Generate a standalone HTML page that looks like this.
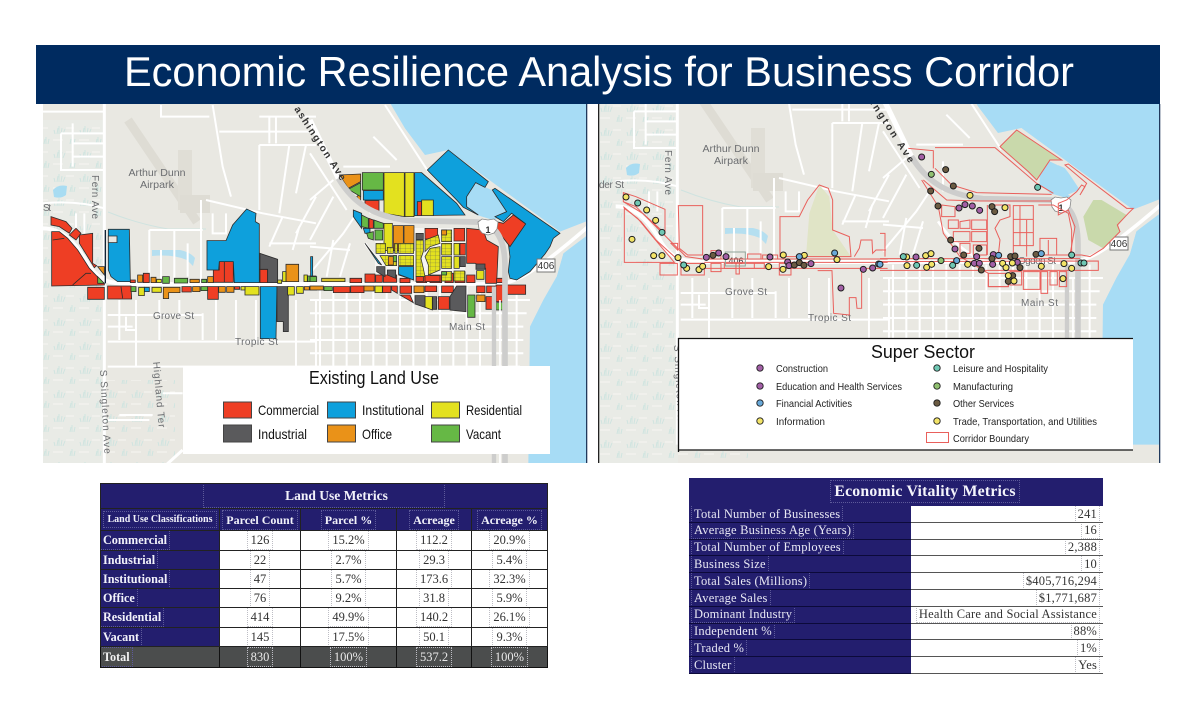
<!DOCTYPE html>
<html lang="en"><head><meta charset="utf-8"><title>Economic Resilience Analysis for Business Corridor</title>
<style>
html,body{margin:0;padding:0;background:#fff}
body{width:1192px;height:720px;position:relative;overflow:hidden;font-family:"Liberation Sans",sans-serif}
#maps{position:absolute;left:0;top:0;filter:blur(.35px)}
table{position:absolute;border-collapse:collapse;table-layout:fixed;font-family:"Liberation Serif",serif;color:#333;background:#fff}
td,th{padding:0;overflow:hidden;white-space:nowrap;line-height:1}
span{outline:1px dotted #bdbdc4;outline-offset:0;padding:2px 3px}
th span,td.l span{outline-color:#5d5a9a}
#t1{left:100px;top:483px;width:447px;border:1px solid #111}
#t1 td,#t1 th{border:1px solid #222;text-align:center;font-size:12.5px}
#t1 th{background:#231e6e;color:#f2f2fa;font-weight:bold;font-size:12px}
#t1 td.l{background:#231e6e;color:#f2f2fa;font-weight:bold;text-align:left;padding-left:0;font-size:12.2px}
#t1 td.l span{padding:2px 2px}
#t1 .tot td{background:#4b4d4d;color:#e8e8e8;border-color:#111}
#t1 .tot td.l{background:#4b4d4d;color:#f2f2f2}
#t2{left:689px;top:478px;width:414px}
#t2 th{background:#231e6e;color:#f4f4fb;font-size:15.8px;font-weight:bold;text-align:center;height:28px;padding-left:58px;letter-spacing:.2px}
#t2 td{height:15.8px;font-size:12.5px;border-bottom:1px solid #555;letter-spacing:.2px}
#t2 td span{padding:1px 2px}
#t2 td.l{background:#231e6e;color:#e8e8f4;padding-left:3px;border-bottom:1px solid #0c0a3a}
#t2 td.v{text-align:right;padding-right:4px;color:#333}
</style></head><body>
<svg id="maps" width="1192" height="480" viewBox="0 0 1192 480" xmlns="http://www.w3.org/2000/svg" font-family="'Liberation Sans',sans-serif">
<defs>
<clipPath id="cl"><rect x="43" y="104" width="543" height="359"/></clipPath>
<clipPath id="cr"><rect x="599" y="104" width="560" height="359"/></clipPath>
<pattern id="tuft" patternUnits="userSpaceOnUse" width="26" height="24"><path d="M5 14l1-6M7 14l0-8M9 14l1-6M11 14l2-5M3 14l-1-4M18 24l1-5M20 24v-7M22 24l1-5" stroke="#cfe4e0" stroke-width="1" fill="none"/><path d="M1 20h10M14 8h8" stroke="#f2f1ed" stroke-width="1.500"/></pattern>
<pattern id="lots" patternUnits="userSpaceOnUse" width="15" height="11"><rect width="15" height="11" fill="#e3e11f"/><path d="M0 0H15M0 0V11" stroke="#555" stroke-width="1.300"/></pattern>
<g id="base">
<rect x="20" y="100" width="570" height="390" fill="#e9e8e2"/>
<rect x="20" y="120" width="85" height="370" fill="#e9ebe6"/>
<rect x="20" y="120" width="85" height="370" fill="url(#tuft)"/>
<rect x="105" y="380" width="70" height="110" fill="url(#tuft)"/>
<path d="M128 120L197 222" stroke="#dedcd4" stroke-width="9"/>
<path d="M178 150h14v60h-14z" fill="#e0ded6"/><path d="M180 195h30v18h-30z" fill="#dedcd4"/>
<path d="M53 190q5-6 14-4l-1 9q-5 4-12 2z" fill="#a8dcf2"/>
<path d="M152 250h28q10 2 15 8l-2 8-6-6q-14-6-35-4z" fill="#b5dff0"/>
<path d="M108 212q30 12 60 17h38" stroke="#cfe3e0" stroke-width="1" fill="none"/>
<g transform="translate(36,100) scale(.3333)" fill="none" stroke="#fff" stroke-width="6">
<path d="M205 0V1100" stroke-width="9"/>
<path d="M20 35H205M75 100H205M75 100V210H205M110 70V200M110 130H205M110 170H205M20 310Q120 300 205 325M120 340V400M145 340V400"/>
<path d="M375 15V50H520M530 15L560 200L585 290M495 300V550M510 300L680 340L840 370" />
<path d="M550 95H840M670 50H840M670 135H840M670 135V330M720 50V130M700 50V130M760 135L730 340M810 135L780 280"/>
<path d="M340 390V550M340 390H500M375 450V550M415 390V550M455 430V530M530 340V400H570V340M740 350L700 440M790 380L770 450M840 290L780 400M840 430H700"/>
<path d="M215 645H500M215 725H840M215 800H840M250 600V720M300 600V800M370 600V720M430 600V720M500 640V720M540 600V720M600 600V720M660 600V720M780 600V800M840 600V800M270 650V690H300M215 680H290"/>
<path d="M250 945H350M215 960H340M300 725V800M380 880H440" />
<path d="M440 1050L385 1100" stroke-width="9"/>
<path d="M20 385C80 385 120 430 155 490S230 550 290 552H840" stroke-width="12"/>
</g>
<g transform="translate(310,100) scale(.3333)" fill="none" stroke="#fff" stroke-width="6">
<path d="M0 60L85 235" stroke-width="16"/>
<path d="M0 160L110 330M0 300L70 240M0 420L70 290M0 520L100 400M100 400L140 340M0 440L120 450M70 420L50 530M120 430L90 530"/>
<path d="M225 15L355 215M180 250L180 340M190 110L260 180M100 200L240 200"/>
<path d="M0 600H660M0 640H650M0 680H640M0 720H640M0 760H640M0 800H630"/>
<path d="M30 560V800M70 560V800M110 560V800M150 560V800M190 560V800M230 560V800M270 560V800M310 560V800M350 560V800M390 560V800M430 560V800M470 560V800M510 560V800M620 560V800"/>
<path d="M165 430C220 510 280 545 320 552" stroke-width="8"/>
</g>
<g transform="translate(310,100) scale(.3333)">
<path d="M235 0L285 85L345 165L415 150L750 395L840 360V0Z" fill="#a7dcf5"/>
<path d="M840 395L760 460L740 530L700 600L660 680L655 1100H860V395Z" fill="#a7dcf5"/>
<path d="M445 300L500 250L545 270L600 340L550 360L500 345Z" fill="#a7dcf5"/>
<g fill="#e9e8e2">
<path d="M352 210L415 150L535 245L525 262L497 248L470 290L470 320L505 345L460 322L440 300Z"/>
<path d="M547 270L555 265L750 400L730 415L720 440L705 462L660 515L620 540L600 535L595 515L600 470L595 430L645 370L605 340L580 365L555 350L590 335Z"/>
<path d="M700 470L750 410L840 385V400L760 460L740 530L610 560Z"/>
</g>
<path d="M0 552H520C600 560 650 540 840 375" stroke="#fff" stroke-width="11" fill="none"/>
</g>
</g>
<g id="hwy" transform="translate(310,100) scale(.3333)" fill="none">
<path d="M85 235C130 310 190 350 300 362L500 366C560 370 585 420 585 500V1100" stroke="#cdcdcc" stroke-width="17"/>
<path d="M552 560V1100" stroke="#cdcdcc" stroke-width="13"/>
<path d="M570 1100V600" stroke="#fff" stroke-width="5"/>
</g>
<g id="shields">
<path d="M537 259h18v13h-18z" fill="#fff" stroke="#777" stroke-width="1"/>
<path d="M478 222l4-3 6 1 6-1 4 3-1 7-3 4-6 2-6-2-3-4z" fill="#fff" stroke="#888" stroke-width=".8"/>
</g>
</defs>

<rect x="36" y="45" width="1124" height="59" fill="#002b60"/>
<text x="124" y="86" font-size="42" fill="#fff" textLength="950" lengthAdjust="spacingAndGlyphs">Economic Resilience Analysis for Business Corridor</text>

<!-- LEFT MAP -->
<g clip-path="url(#cl)">
<use href="#base"/>
<path d="M375 275L375 228H465V283L395 278Z" fill="#f6f5f2"/>
<g transform="translate(36,100) scale(.3333)" stroke="#2c2c2c" stroke-width="2.4">
<g fill="#ee3e24">
<path d="M47 395L70 395L95 415L125 450L160 505L205 552V555L47 558Z"/>
<path d="M45 350L90 365L108 385L100 400L70 380L45 375Z"/><path d="M100 405L120 385L135 400L120 420Z"/>
<path d="M130 405L170 400V490L182 497L175 503L155 470L130 430Z"/><path d="M155 562H205V598H155Z"/><path d="M215 558H285L287 597H215Z"/>
<path d="M532 510H550V485H592V547H532Z"/><path d="M672 508H695V548H672Z"/><path d="M322 520H340V548H322Z"/><path d="M283 540H298V548H283Z"/><path d="M438 560H466V576H438Z"/><path d="M515 560H547V598H515Z"/><path d="M596 560H611V568H596Z"/>
<path d="M50 420L85 415M110 555L150 520L165 520M255 560L260 595M565 485V547" fill="none"/>
</g>
<g fill="#0ea0dc">
<path d="M217 388H280L283 545H245L225 530L217 510Z"/>
<path d="M513 422H570L590 375L632 327L660 340L658 365L670 372V548H595L592 485H550L548 510H513Z"/>
<path d="M673 560H723L720 716H673Z"/><path d="M325 562H340V575H325Z"/><path d="M824 470H830V530H824Z"/>
</g>
<path d="M217 408H243V428H217Z" fill="#e9e8e2"/><path d="M208 390V550" stroke="#123" stroke-width="4"/>
<g fill="#5a5a5c"><path d="M672 460L725 478V548H695V508H672Z"/><path d="M723 560H757V695H742V665H723Z"/></g>
<g fill="#ea9218">
<path d="M185 500H205V525Z"/><path d="M750 493H788V545H750Z"/><path d="M305 525H320V547H305Z"/><path d="M345 532H360V548H345Z"/><path d="M462 538H490V548H462Z"/><path d="M515 530H532V548H515Z"/><path d="M382 562H432V578H398V596H382Z"/><path d="M470 560H492V575H470Z"/><path d="M548 560H568V577H548Z"/><path d="M572 560H594V577H572Z"/><path d="M805 560H820V570H805Z"/><path d="M822 560H842V570H822Z"/>
</g>
<g fill="#e3e11f"><path d="M740 515H750V545H740Z"/><path d="M308 562H325V587H308Z"/><path d="M348 562H376V577H348Z"/><path d="M627 560H669V585H627Z"/><path d="M615 560H627V570H615Z"/><path d="M755 560H775V585H755Z"/><path d="M782 560H802V580H782Z"/><path d="M362 538H376V548H362Z"/><path d="M725 540H737V550H725Z"/><path d="M804 525H814V545H804Z"/></g>
<g fill="#66b845"><path d="M185 530L205 550H185Z"/><path d="M380 530H400V550H380Z"/><path d="M415 535H455V549H415Z"/><path d="M497 538H512V548H497Z"/><path d="M285 560H300V575H285Z"/><path d="M495 560H515V572H495Z"/><path d="M815 528H840V545H815Z"/></g>
</g>
<g transform="translate(310,100) scale(.3333)" stroke="#2c2c2c" stroke-width="2.4">
<g fill="#0ea0dc">
<path d="M352 210L415 150L535 245L525 262L497 248L470 290L470 320L505 345L460 322L440 300Z"/>
<path d="M547 270L555 265L750 400L730 415L720 440L705 462L660 515L620 540L600 535L595 515L600 470L595 430L645 370L605 340L580 365L555 350L590 335Z"/>
<path d="M314 218H335L440 310L465 345L314 347Z"/><path d="M160 272H220V300H160Z"/><path d="M130 330L155 340V385L130 350Z"/><path d="M160 385H180V400H165Z"/><path d="M165 430L205 490L215 495Z"/><path d="M266 500H311V540L266 525Z"/>
</g>
<g fill="#ee3e24">
<path d="M545 362L580 370L610 345L647 372L600 440L565 395Z"/>
<path d="M470 385L520 390L530 420L565 440L560 550H527V505L495 490H470Z"/>
<path d="M165 302H207V335H190L165 320Z"/><path d="M177 355L190 360V385H177Z"/><path d="M322 305H335V347H322Z"/>
<path d="M120 535H155V548H120Z"/><path d="M165 522H195V547H165Z"/><path d="M197 525H217V547H197Z"/><path d="M220 525H260V547H220Z"/><path d="M270 535H300V548H270Z"/><path d="M70 560H120V578H70Z"/><path d="M122 558H162V578H122Z"/><path d="M218 558H243V578H218Z"/><path d="M245 558H262V580L245 570Z"/><path d="M385 590H418V628H385Z"/><path d="M528 590H553V628H528Z"/><path d="M558 555H583V605H558Z"/><path d="M587 555H647V583H587Z"/><path d="M270 585H300L310 608Z"/><path d="M270 558H305V580H270Z"/><path d="M345 558H380V575H345Z"/><path d="M395 558H430V578H395Z"/><path d="M470 525H495V548H470Z"/><path d="M500 558H525V578H500Z"/><path d="M530 558H555V578H530Z"/><path d="M560 535H580V548H560Z"/><path d="M320 530H350V548H320Z"/><path d="M360 525H395V548H360Z"/><path d="M405 520H430V548H405Z"/><path d="M435 515H465V548H435Z"/>
</g>
<g fill="#ea9218"><path d="M88 225L152 222V245L115 265Z"/><path d="M140 290L152 280V305Z"/><path d="M0 558H40V570H0Z"/><path d="M162 558H192V573H162Z"/><path d="M312 558H342V578H312Z"/><path d="M500 585H525V605H500Z"/><path d="M35 535H105V545H35Z" fill="#d9c32e"/></g>
<g fill="#66b845"><path d="M115 268L152 248V290Z"/><path d="M157 218H220V270H157Z"/><path d="M155 345L175 355V385L155 380Z"/><path d="M192 360L220 370V385H192Z"/><path d="M170 400L190 395V420L175 415Z"/><path d="M195 390H218V420H195Z"/><path d="M473 585H495V652H473Z"/><path d="M558 608H580V630H558Z"/><path d="M42 560H67V572H42Z"/><path d="M0 530H20V545H0Z"/></g>
<g fill="#e3e11f"><path d="M222 218H283V350L222 340Z"/><path d="M285 218H312V350H285Z"/><path d="M335 300H370V347H335Z"/><path d="M195 558H217V578H195Z"/><path d="M345 590H367V630L345 622Z"/><path d="M500 512H522V538H500Z"/></g>
<g fill="#5a5a5c"><path d="M315 587H345V622L315 612Z"/><path d="M368 590H380V628H368Z"/><path d="M420 590L440 558H468V635L420 630Z"/><path d="M498 492H525V508H498Z"/></g>
</g>
<!-- central subdivision -->
<g transform="translate(360,215) scale(.3333)" stroke="#2c2c2c" stroke-width="2.2">
<path d="M72 25H97V107H72Z" fill="#e3e11f"/>
<path d="M100 32H130V107H100Z" fill="#ea9218"/><path d="M132 32H162V107H132Z" fill="#ea9218"/>
<path d="M195 40H233V72H195Z" fill="#ee3e24"/><path d="M168 55H190V73H168Z" fill="#5a5a5c"/>
<path d="M282 40H314V78H282Z" fill="#ee3e24"/><path d="M300 85H316V120H300Z" fill="#ee3e24"/><path d="M300 125H316V155H300Z" fill="#5a5a5c"/>
<path d="M50 155H75V185L50 170Z" fill="#5a5a5c"/><path d="M82 165H107V190L82 180Z" fill="#5a5a5c"/>
<path d="M116 155H161V195L116 178Z" fill="#0ea0dc"/>
<g fill="url(#lots)">
<path d="M48 85H76V115H48Z"/><path d="M82 97H100V115H82Z"/><path d="M104 85H112V115H104Z"/><path d="M116 85H161V115H116Z"/>
<path d="M60 122H110V152H78Z"/><path d="M116 122H161V152H116Z"/>
<path d="M168 75H190V110L183 130L190 160L195 185H168Z"/>
<path d="M195 75L235 60L240 85L210 95L195 110Z"/>
<path d="M210 100L240 95V165L205 180V150L195 125Z"/>
<path d="M245 45H275V80H245Z"/><path d="M245 85H275V120H245Z"/><path d="M245 125H275V160H245Z"/><path d="M245 170H275V198H245Z"/>
<path d="M282 168H314V198H282Z"/>
</g>
<path d="M282 85H298V120H282ZM282 125H298V160H282Z" fill="#e3e11f"/>
<path d="M245 45H260V60H245ZM85 125H100V150H85Z" fill="#ea9218"/>
<path d="M245 170H260V180H245ZM100 122H110V140H100Z" fill="#66b845"/>
<path d="M168 185H190V200H168Z" fill="#ee3e24"/><path d="M195 182H240V200H195Z" fill="#ee3e24"/>
</g>
<use href="#hwy"/>
<use href="#shields"/>
<g fill="#6b6d70" font-size="10">
<text x="43" y="211" textLength="8">St</text>
<text x="157" y="176" text-anchor="middle" textLength="57" lengthAdjust="spacingAndGlyphs">Arthur Dunn</text>
<text x="157" y="188" text-anchor="middle" textLength="34" lengthAdjust="spacingAndGlyphs">Airpark</text>
<text x="153" y="319" textLength="41">Grove St</text>
<text x="235" y="345" textLength="43">Tropic St</text>
<text x="449" y="330" textLength="36">Main St</text>
<text transform="translate(92,175) rotate(90)" textLength="44">Fern Ave</text>
<text transform="translate(100,370) rotate(87)" textLength="84">S Singleton Ave</text>
<text transform="translate(153,362) rotate(85)" textLength="66">Highland Ter</text>
<text transform="translate(294,109) rotate(57)" fill="#333" textLength="86" font-weight="bold">ashington Ave</text>
</g>
<text x="546" y="269" text-anchor="middle" font-size="10" fill="#333">406</text>
<text x="488" y="233" text-anchor="middle" font-size="9" font-weight="bold" fill="#333">1</text>
</g>
<rect x="586" y="104" width="1.3" height="359" fill="#21395c"/>
<rect x="183" y="366" width="367" height="88" fill="#fff"/>
<text x="374" y="384" font-size="18" text-anchor="middle" fill="#111" textLength="130" lengthAdjust="spacingAndGlyphs">Existing Land Use</text>
<g stroke="#444" stroke-width="1">
<rect x="223.500" y="402" width="28" height="16" fill="#ee3e24"/><rect x="223.500" y="425" width="28" height="17" fill="#5a5a5c"/>
<rect x="327.500" y="402" width="28" height="16" fill="#0ea0dc"/><rect x="327.500" y="425" width="28" height="17" fill="#ea9218"/>
<rect x="431.500" y="402" width="28" height="16" fill="#e3e11f"/><rect x="431.500" y="425" width="28" height="17" fill="#66b845"/>
</g>
<g font-size="14" fill="#111">
<text x="258" y="415" textLength="61" lengthAdjust="spacingAndGlyphs">Commercial</text>
<text x="258" y="439" textLength="49" lengthAdjust="spacingAndGlyphs">Industrial</text>
<text x="362" y="415" textLength="62" lengthAdjust="spacingAndGlyphs">Institutional</text>
<text x="362" y="439" textLength="30" lengthAdjust="spacingAndGlyphs">Office</text>
<text x="466" y="415" textLength="56" lengthAdjust="spacingAndGlyphs">Residential</text>
<text x="466" y="439" textLength="35" lengthAdjust="spacingAndGlyphs">Vacant</text>
</g>

<!-- RIGHT MAP -->
<g clip-path="url(#cr)">
<g transform="translate(573,-22)"><use href="#base"/><use href="#hwy"/><use href="#shields"/></g>
<g transform="translate(596,100) scale(.3333)"><path d="M640 340L670 255L700 290L710 390L765 470H630Z" fill="#e0e4c6"/></g>
<g transform="translate(880,100) scale(.3333)" fill="#c9d9ab"><path d="M360 140L410 90L545 180L510 180L470 240L445 215Z"/><path d="M610 350L640 300L665 300L740 345L715 375L720 395L670 445L625 420Z"/></g>
<g fill="#6b6d70" font-size="10">
<text x="599" y="188" textLength="25">der St</text>
<text x="731" y="152" text-anchor="middle" textLength="57" lengthAdjust="spacingAndGlyphs">Arthur Dunn</text>
<text x="731" y="164" text-anchor="middle" textLength="34" lengthAdjust="spacingAndGlyphs">Airpark</text>
<text x="725" y="295" textLength="42">Grove St</text>
<text x="808" y="321" textLength="43">Tropic St</text>
<text x="1021" y="306" textLength="37">Main St</text>
<text transform="translate(665,150) rotate(90)" textLength="45">Fern Ave</text>
<text transform="translate(674,345) rotate(87)" textLength="84">S Singleton Ave</text>
<text transform="translate(1018,264)" textLength="38">Ogden St</text>
<text transform="translate(870,103) rotate(57)" fill="#333" textLength="72" font-weight="bold">ington Ave</text>
</g>
<text x="1119" y="247" text-anchor="middle" font-size="10" fill="#333">406</text>
<text x="1061" y="211" text-anchor="middle" font-size="9" font-weight="bold" fill="#333">1</text>
<text x="736" y="264" text-anchor="middle" font-size="9" fill="#333">406</text>
<!-- boundaries -->
<g transform="translate(596,100) scale(.3333)" fill="none" stroke="#e9605c" stroke-width="3">
<path d="M82 278L120 290L207 328V400L190 385L140 340L82 305ZM82 305L120 320L175 375L225 425L270 470L320 477M82 320L135 365L180 420L235 470L260 490H325"/>
<path d="M85 325V487H235L170 410L125 355Z"/><path d="M225 430H245V450Z"/><path d="M192 490H244V525H192ZM255 490H325V525H255Z"/>
<path d="M247 317H320V465H275L250 445Z"/>
<path d="M552 350H610L635 300L670 255L697 265L710 300V390L760 410L765 470H552Z"/>
<path d="M775 470L790 445L795 420H828L830 460L840 450H870"/>
<path d="M665 512H708L713 640L760 645V593H780L783 625H797V512"/>
<path d="M325 477H875M325 487H875M325 505H875"/>
<path d="M345 490H375V515H345ZM345 452H375V477H345ZM385 490H420V505H385ZM420 490H430V522H420ZM430 490H475V505H430ZM475 490H505V505H475ZM550 490H585V525H550ZM455 462H495V477H455ZM500 465H545V477H500Z"/>
<path d="M388 456H448V498H388Z" stroke="#8fa59a"/>
</g>
<g transform="translate(880,100) scale(.3333)" fill="none" stroke="#e9605c" stroke-width="3">
<path d="M85 145L160 152V205M165 143H345L470 250L520 280"/>
<path d="M165 205L215 255L290 278L515 283M130 240L200 300L300 303L515 303"/>
<path d="M125 240L175 320L190 400L240 470L325 520V560L385 560V518"/>
<path d="M360 140L410 90L545 180L510 180L470 240L445 215Z"/>
<path d="M555 195L565 192L740 325L760 325L745 340L712 375L720 395L670 445L630 470L605 465L570 465L585 380L565 330L535 345V310L560 300L590 275L605 255L615 260L600 285L620 250Z"/>
<path d="M0 476H600M0 485L655 483V511H0"/>
<path d="M0 400H15V470M185 315L225 320V350H185ZM205 360H235V385H205ZM240 365L270 360V385H240ZM275 360H320V388H275ZM220 395H270V425H220ZM275 395H320V425H275ZM240 430H270V460H240ZM280 435H320V465H280Z"/>
<path d="M345 315H390V350L360 360L345 385L360 420L355 465M322 315V465"/>
<path d="M400 317H460V437H400ZM420 317V437M440 360V437M400 358H460M400 398H460M400 437V470M440 437V470"/>
<path d="M475 315L520 315L565 340L575 390V465H480V415H530V465M505 420V465"/>
<path d="M325 520H385V560H325ZM430 515H480V568H430ZM483 515H503V580H483ZM510 515H532V555H510ZM538 515H560V560H538ZM390 515H425V555H390Z"/>
</g>
<!-- dots -->
<g transform="translate(596,100) scale(.3333)" stroke="#1d1d1d" stroke-width="3">
<g fill="#f3e468"><circle cx="90" cy="291" r="9"/><circle cx="152" cy="330" r="9"/><circle cx="179" cy="361" r="9"/><circle cx="108" cy="418" r="9"/><circle cx="173" cy="467" r="9"/><circle cx="198" cy="467" r="9"/><circle cx="246" cy="473" r="9"/><circle cx="272" cy="505" r="9"/><circle cx="309" cy="509" r="9"/><circle cx="320" cy="499" r="9"/><circle cx="518" cy="500" r="9"/><circle cx="562" cy="465" r="9"/><circle cx="561" cy="508" r="9"/><circle cx="625" cy="466" r="9"/><circle cx="723" cy="479" r="9"/></g>
<g fill="#6fc8b4"><circle cx="125" cy="309" r="9"/><circle cx="198" cy="397" r="9"/><circle cx="263" cy="495" r="9"/></g>
<g fill="#68a8d8"><circle cx="610" cy="470" r="9"/><circle cx="716" cy="459" r="9"/><circle cx="848" cy="492" r="9"/></g>
<g fill="#a25fa6"><circle cx="331" cy="472" r="9"/><circle cx="368" cy="459" r="9"/><circle cx="390" cy="470" r="9"/><circle cx="522" cy="471" r="9"/><circle cx="575" cy="486" r="9"/><circle cx="579" cy="497" r="9"/><circle cx="645" cy="491" r="9"/><circle cx="735" cy="564" r="9"/><circle cx="802" cy="508" r="9"/><circle cx="830" cy="504" r="9"/></g>
<g fill="#6b5b42"><circle cx="351" cy="466" r="9"/><circle cx="595" cy="495" r="9"/><circle cx="610" cy="488" r="9"/><circle cx="624" cy="496" r="9"/></g>
</g>
<g transform="translate(880,100) scale(.3333)" stroke="#1d1d1d" stroke-width="3">
<g fill="#a25fa6"><circle cx="125" cy="171" r="9"/><circle cx="237" cy="324" r="9"/><circle cx="255" cy="314" r="9"/><circle cx="277" cy="318" r="9"/><circle cx="299" cy="331" r="9"/><circle cx="108" cy="471" r="9"/><circle cx="225" cy="447" r="9"/><circle cx="290" cy="470" r="9"/><circle cx="283" cy="490" r="9"/><circle cx="298" cy="490" r="9"/><circle cx="338" cy="493" r="9"/><circle cx="340" cy="464" r="9"/><circle cx="412" cy="487" r="9"/></g>
<g fill="#90c070"><circle cx="154" cy="223" r="9"/><circle cx="183" cy="482" r="9"/></g>
<g fill="#6b5b42"><circle cx="197" cy="209" r="9"/><circle cx="220" cy="258" r="9"/><circle cx="152" cy="273" r="9"/><circle cx="174" cy="318" r="9"/><circle cx="336" cy="320" r="9"/><circle cx="344" cy="335" r="9"/><circle cx="212" cy="420" r="9"/><circle cx="297" cy="445" r="9"/><circle cx="251" cy="465" r="9"/><circle cx="304" cy="510" r="9"/><circle cx="336" cy="476" r="9"/><circle cx="392" cy="470" r="9"/><circle cx="405" cy="468" r="9"/><circle cx="420" cy="503" r="9"/><circle cx="468" cy="463" r="9"/><circle cx="398" cy="527" r="9"/><circle cx="385" cy="544" r="9"/></g>
<g fill="#f3e468"><circle cx="270" cy="286" r="9"/><circle cx="375" cy="323" r="9"/><circle cx="80" cy="471" r="9"/><circle cx="137" cy="467" r="9"/><circle cx="153" cy="461" r="9"/><circle cx="81" cy="497" r="9"/><circle cx="140" cy="502" r="9"/><circle cx="155" cy="493" r="9"/><circle cx="263" cy="493" r="9"/><circle cx="368" cy="490" r="9"/><circle cx="378" cy="503" r="9"/><circle cx="397" cy="489" r="9"/><circle cx="385" cy="527" r="9"/><circle cx="402" cy="543" r="9"/><circle cx="484" cy="499" r="9"/><circle cx="552" cy="491" r="9"/><circle cx="575" cy="505" r="9"/><circle cx="549" cy="536" r="9"/></g>
<g fill="#6fc8b4"><circle cx="473" cy="262" r="9"/><circle cx="70" cy="470" r="9"/><circle cx="110" cy="496" r="9"/><circle cx="218" cy="496" r="9"/><circle cx="575" cy="465" r="9"/><circle cx="603" cy="489" r="9"/><circle cx="612" cy="489" r="9"/></g>
<g fill="#68a8d8"><circle cx="230" cy="482" r="9"/><circle cx="356" cy="466" r="9"/><circle cx="484" cy="461" r="9"/><circle cx="0" cy="493" r="9"/></g>
</g>
</g>
<rect x="598" y="104" width="1.300" height="359" fill="#222"/>
<rect x="1159" y="104" width="1.300" height="359" fill="#21395c"/>
<rect x="678" y="338" width="455" height="112" fill="#fff"/>
<path d="M678 338.500H1133M678 450H1133M678.500 338V452" stroke="#111" stroke-width="1.300" fill="none"/>
<text x="923" y="358" font-size="18" text-anchor="middle" fill="#111" textLength="104" lengthAdjust="spacingAndGlyphs">Super Sector</text>
<g stroke="#1d1d1d" stroke-width=".9">
<circle cx="760" cy="368" r="3.200" fill="#a25fa6"/><circle cx="760" cy="386" r="3.200" fill="#a25fa6"/><circle cx="760" cy="403" r="3.200" fill="#68a8d8"/><circle cx="760" cy="421" r="3.200" fill="#f3e468"/>
<circle cx="937" cy="368" r="3.200" fill="#6fc8b4"/><circle cx="937" cy="386" r="3.200" fill="#90c070"/><circle cx="937" cy="403" r="3.200" fill="#6b5b42"/><circle cx="937" cy="421" r="3.200" fill="#f3e468"/>
</g>
<rect x="926.500" y="432.500" width="22" height="10" fill="#fff" stroke="#e9605c" stroke-width="1"/>
<g font-size="10.500" fill="#222">
<text x="776" y="372" textLength="52" lengthAdjust="spacingAndGlyphs">Construction</text>
<text x="776" y="390" textLength="126" lengthAdjust="spacingAndGlyphs">Education and Health Services</text>
<text x="776" y="407" textLength="76" lengthAdjust="spacingAndGlyphs">Financial Activities</text>
<text x="776" y="425" textLength="49" lengthAdjust="spacingAndGlyphs">Information</text>
<text x="953" y="372" textLength="95" lengthAdjust="spacingAndGlyphs">Leisure and Hospitality</text>
<text x="953" y="390" textLength="60" lengthAdjust="spacingAndGlyphs">Manufacturing</text>
<text x="953" y="407" textLength="61" lengthAdjust="spacingAndGlyphs">Other Services</text>
<text x="953" y="425" textLength="144" lengthAdjust="spacingAndGlyphs">Trade, Transportation, and Utilities</text>
<text x="953" y="442" textLength="76" lengthAdjust="spacingAndGlyphs">Corridor Boundary</text>
</g>
</svg>

<table id="t1">
<colgroup><col style="width:119px"><col style="width:81px"><col style="width:96px"><col style="width:75px"><col style="width:76px"></colgroup>
<tr style="height:25px"><th colspan="5" style="font-size:13.500px"><span style="padding:4px 56px 4px 81px">Land Use Metrics</span></th></tr>
<tr style="height:22px"><th style="font-size:10px"><span>Land Use Classifications</span></th><th><span>Parcel Count</span></th><th><span>Parcel %</span></th><th><span>Acreage</span></th><th><span>Acreage %</span></th></tr>
<tr style="height:20px"><td class="l"><span>Commercial</span></td><td><span>126</span></td><td><span>15.2%</span></td><td><span>112.2</span></td><td><span>20.9%</span></td></tr>
<tr style="height:19px"><td class="l"><span>Industrial</span></td><td><span>22</span></td><td><span>2.7%</span></td><td><span>29.3</span></td><td><span>5.4%</span></td></tr>
<tr style="height:19px"><td class="l"><span>Institutional</span></td><td><span>47</span></td><td><span>5.7%</span></td><td><span>173.6</span></td><td><span>32.3%</span></td></tr>
<tr style="height:19px"><td class="l"><span>Office</span></td><td><span>76</span></td><td><span>9.2%</span></td><td><span>31.8</span></td><td><span>5.9%</span></td></tr>
<tr style="height:20px"><td class="l"><span>Residential</span></td><td><span>414</span></td><td><span>49.9%</span></td><td><span>140.2</span></td><td><span>26.1%</span></td></tr>
<tr style="height:19px"><td class="l"><span>Vacant</span></td><td><span>145</span></td><td><span>17.5%</span></td><td><span>50.1</span></td><td><span>9.3%</span></td></tr>
<tr class="tot" style="height:21px"><td class="l"><span>Total</span></td><td><span>830</span></td><td><span>100%</span></td><td><span>537.2</span></td><td><span>100%</span></td></tr>
</table>

<table id="t2">
<colgroup><col style="width:222px"><col style="width:192px"></colgroup>
<tr><th colspan="2"><span>Economic Vitality Metrics</span></th></tr>
<tr><td class="l"><span>Total Number of Businesses</span></td><td class="v"><span>241</span></td></tr>
<tr><td class="l"><span>Average Business Age (Years)</span></td><td class="v"><span>16</span></td></tr>
<tr><td class="l"><span>Total Number of Employees</span></td><td class="v"><span>2,388</span></td></tr>
<tr><td class="l"><span>Business Size</span></td><td class="v"><span>10</span></td></tr>
<tr><td class="l"><span>Total Sales (Millions)</span></td><td class="v"><span>$405,716,294</span></td></tr>
<tr><td class="l"><span>Average Sales</span></td><td class="v"><span>$1,771,687</span></td></tr>
<tr><td class="l"><span>Dominant Industry</span></td><td class="v"><span>Health Care and Social Assistance</span></td></tr>
<tr><td class="l"><span>Independent %</span></td><td class="v"><span>88%</span></td></tr>
<tr><td class="l"><span>Traded %</span></td><td class="v"><span>1%</span></td></tr>
<tr><td class="l"><span>Cluster</span></td><td class="v"><span>Yes</span></td></tr>
</table>
</body></html>
